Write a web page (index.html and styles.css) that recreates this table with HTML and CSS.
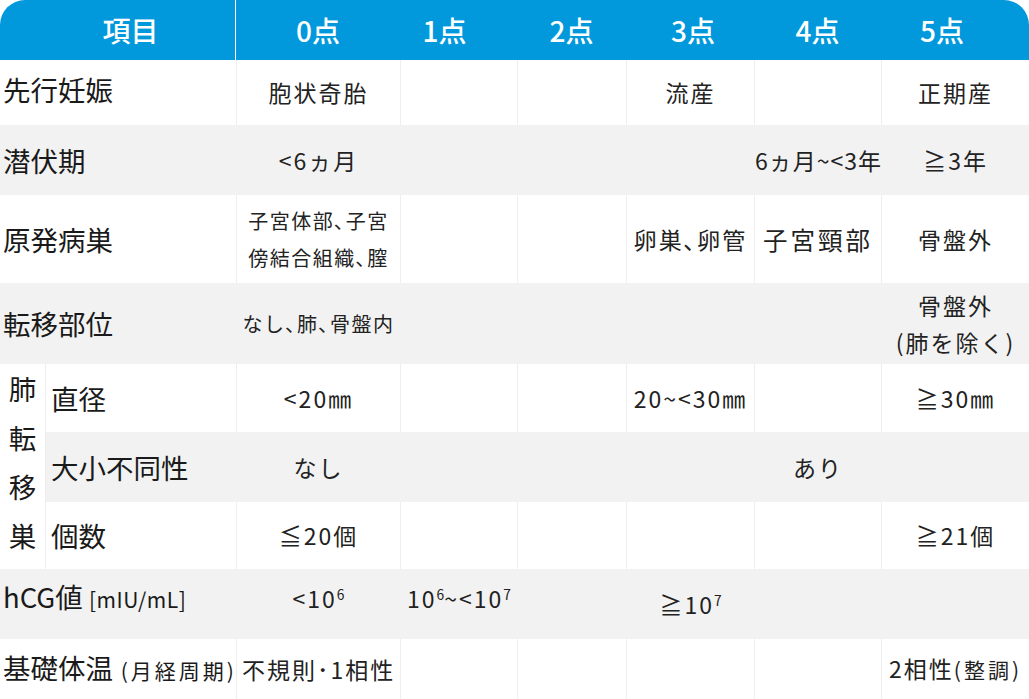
FILE: index.html
```html
<!DOCTYPE html>
<html lang="ja">
<head>
<meta charset="utf-8">
<title>絨毛性疾患診断スコア</title>
<link rel="stylesheet" href="styles.css">
</head>
<body>
<table class="score">
  <colgroup>
    <col class="c-a"><col class="c-b"><col class="c-0"><col class="c-1"><col class="c-2"><col class="c-3"><col class="c-4"><col class="c-5">
  </colgroup>
  <thead>
    <tr class="head">
      <th colspan="2" class="h-item">項目</th>
      <th>0点</th>
      <th class="h-1">1点</th>
      <th>2点</th>
      <th class="h-3">3点</th>
      <th>4点</th>
      <th class="h-5">5点</th>
    </tr>
  </thead>
  <tbody>
    <tr class="r1">
      <td colspan="2" class="label up">先行妊娠</td>
      <td>胞状奇胎</td><td></td><td></td><td>流産</td><td></td><td>正期産</td>
    </tr>
    <tr class="r2 g">
      <td colspan="2" class="label">潜伏期</td>
      <td>&lt;6ヵ月</td><td></td><td></td><td></td><td class="tight">6ヵ月~&lt;3年</td><td>≧3年</td>
    </tr>
    <tr class="r3">
      <td colspan="2" class="label">原発病巣</td>
      <td class="small">子宮体部､子宮<br>傍結合組織､膣</td><td></td><td></td><td>卵巣､卵管</td><td class="wide">子宮頸部</td><td>骨盤外</td>
    </tr>
    <tr class="r4 g">
      <td colspan="2" class="label">転移部位</td>
      <td class="small">なし､肺､骨盤内</td><td></td><td></td><td></td><td></td><td>骨盤外<br>(肺を除く)</td>
    </tr>
    <tr class="r5">
      <td rowspan="3" class="lung">肺転移巣</td>
      <td class="label sub">直径</td>
      <td>&lt;20㎜</td><td></td><td></td><td>20~&lt;30㎜</td><td></td><td>≧30㎜</td>
    </tr>
    <tr class="r6 g">
      <td class="label sub">大小不同性</td>
      <td>なし</td><td></td><td></td><td></td><td>あり</td><td></td>
    </tr>
    <tr class="r7">
      <td class="label sub">個数</td>
      <td>≦20個</td><td></td><td></td><td></td><td></td><td>≧21個</td>
    </tr>
    <tr class="r8 g">
      <td colspan="2" class="label raise">hCG値 <span class="unit">[mIU/mL]</span></td>
      <td class="raise">&lt;10<sup>6</sup></td><td class="raise">10<sup>6</sup>~&lt;10<sup>7</sup></td><td></td><td>≧10<sup>7</sup></td><td></td><td></td>
    </tr>
    <tr class="r9">
      <td colspan="2" class="label">基礎体温<span class="note"> (月経周期)</span></td>
      <td>不規則･1相性</td><td></td><td></td><td></td><td></td><td>2相性<span class="note">(整調)</span></td>
    </tr>
  </tbody>
</table>
</body>
</html>
```

FILE: styles.css
```css
html, body {
  margin: 0;
  padding: 0;
  background: #ffffff;
}

body {
  font-family: "Noto Sans CJK JP", "Noto Sans", sans-serif;
  color: #222222;
}

.score {
  width: 1029px;
  table-layout: fixed;
  border-collapse: separate;
  border-spacing: 0;
}

.c-a { width: 45px; }
.c-b { width: 191px; }
.c-0 { width: 164px; }
.c-1 { width: 117px; }
.c-2 { width: 109px; }
.c-3 { width: 128px; }
.c-4 { width: 127px; }
.c-5 { width: 148px; }

.head th {
  height: 60px;
  padding: 0;
  background: #0299dc;
  color: #ffffff;
  font-size: 28px;
  font-weight: 500;
  text-align: center;
  vertical-align: middle;
  line-height: 1;
}

.head .h-item {
  border-top-left-radius: 25px;
  border-right: 1px solid #ffffff;
  padding-left: 26px;
}

.head .h-1 { padding-right: 28px; }
.head .h-3 { padding-left: 6px; }
.head .h-5 {
  border-top-right-radius: 25px;
  padding-right: 26px;
}

.r1 { height: 65px; }
.r2 { height: 70px; }
.r3 { height: 88px; }
.r4 { height: 81px; }
.r5 { height: 68px; }
.r6 { height: 70px; }
.r7 { height: 67px; }
.r8 { height: 70px; }
.r9 { height: 60px; }

td {
  padding: 0;
  border-left: 1px solid #eeeeee;
  background: #ffffff;
  text-align: center;
  vertical-align: middle;
  font-size: 23px;
  letter-spacing: 2px;
  line-height: 37px;
  white-space: nowrap;
}

.g td {
  background: #f2f2f2;
  border-left-color: #f2f2f2;
}

td.label {
  border-left: none;
  text-align: left;
  padding-left: 3px;
  font-size: 27.5px;
  letter-spacing: 0;
  color: #1a1a1a;
}

td.label.sub {
  border-left: 1px solid #eeeeee;
  padding-left: 5px;
}

.g td.label.sub {
  border-left-color: #eeeeee;
}

td.up { padding-bottom: 6px; }
td.raise { padding-bottom: 12px; }

td.lung {
  border-left: none;
  background: #ffffff;
  font-size: 27.5px;
  letter-spacing: 0;
  line-height: 49px;
  vertical-align: top;
  white-space: normal;
  color: #1a1a1a;
}

td.small {
  font-size: 20px;
  letter-spacing: 1.5px;
}

td.tight { letter-spacing: 1px; }
td.wide {
  font-size: 24.5px;
  letter-spacing: 3px;
}

.unit {
  font-size: 21px;
  letter-spacing: 0.5px;
}

.note {
  font-size: 21px;
  letter-spacing: 3px;
}

sup {
  font-size: 0.6em;
  line-height: 0;
  vertical-align: 0.6em;
  letter-spacing: 0;
}
```
